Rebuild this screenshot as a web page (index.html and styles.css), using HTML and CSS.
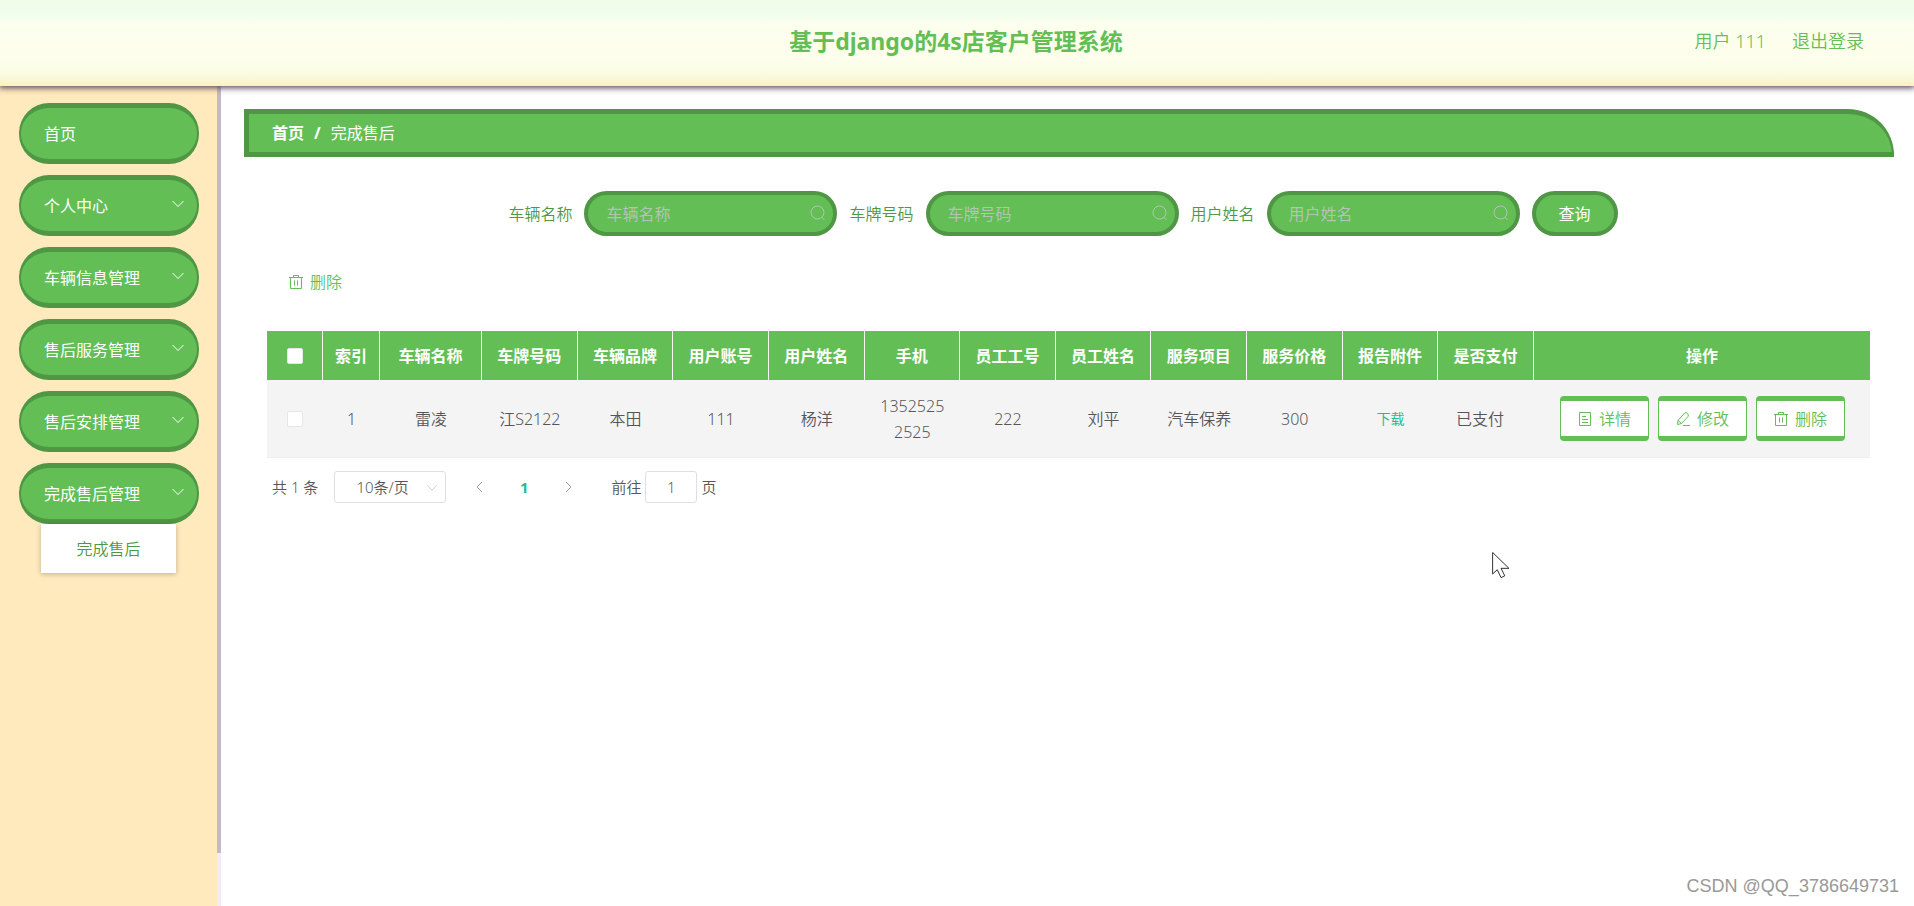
FILE: index.html
```html
<!DOCTYPE html>
<html lang="zh-CN">
<head>
<meta charset="utf-8">
<title>基于django的4s店客户管理系统</title>
<link rel="stylesheet" href="styles.css">
</head>
<body>
<svg class="defs" aria-hidden="true">
  <symbol id="i-down" viewBox="0 0 14 14"><path d="M1.5 4 7 9.500 12.500 4"/></symbol>
  <symbol id="i-left" viewBox="0 0 14 14"><path d="M9 2 4 7l5 5"/></symbol>
  <symbol id="i-right" viewBox="0 0 14 14"><path d="M5 2l5 5-5 5"/></symbol>
  <symbol id="i-search" viewBox="0 0 16 16"><circle cx="7.500" cy="7.500" r="6.500"/><path d="M11.500 12l3 3"/></symbol>
  <symbol id="i-trash" viewBox="0 0 16 16"><path d="M1 3.500h14M5.500 3.500v-2h5v2M2.500 3.500v11h11v-11M6.500 6.500v5M9.500 6.500v5"/></symbol>
  <symbol id="i-doc" viewBox="0 0 16 16"><path d="M2.500 1.500h11v13h-11zM5 5.500h4M5 8.500h6M5 11.500h6"/></symbol>
  <symbol id="i-edit" viewBox="0 0 16 16"><path d="M2.500 13.500l.5-4L9.500 2q1.500-1 3 .5t.5 3L6.500 12.500zM3 9.500l3.500 3M8 14.500h7"/></symbol>
</svg>

<header class="topbar">
  <h1 class="topbar-title">基于django的4s店客户管理系统</h1>
  <div class="topbar-user">
    <span>用户 111</span>
    <a class="logout" href="#">退出登录</a>
  </div>
</header>

<div class="layout">
  <aside class="sidebar">
    <nav class="menu">
      <button class="menu-item" type="button">首页</button>
      <button class="menu-item" type="button">个人中心<svg class="icon menu-arrow"><use href="#i-down"/></svg></button>
      <button class="menu-item" type="button">车辆信息管理<svg class="icon menu-arrow"><use href="#i-down"/></svg></button>
      <button class="menu-item" type="button">售后服务管理<svg class="icon menu-arrow"><use href="#i-down"/></svg></button>
      <button class="menu-item" type="button">售后安排管理<svg class="icon menu-arrow"><use href="#i-down"/></svg></button>
      <div class="menu-group">
        <button class="menu-item" type="button">完成售后管理<svg class="icon menu-arrow"><use href="#i-down"/></svg></button>
        <a class="submenu-item" href="#">完成售后</a>
      </div>
    </nav>
    <div class="scroll-track"><div class="scroll-thumb"></div></div>
  </aside>

  <main class="main">
    <nav class="breadcrumb" aria-label="路径">
      <a class="breadcrumb-home" href="#">首页</a>
      <span class="breadcrumb-sep">/</span>
      <span>完成售后</span>
    </nav>

    <form class="search">
      <label class="search-label" for="car">车辆名称</label>
      <div class="search-box"><input class="search-input" id="car" type="text" placeholder="车辆名称"><svg class="icon search-icon"><use href="#i-search"/></svg></div>
      <label class="search-label" for="plate">车牌号码</label>
      <div class="search-box"><input class="search-input" id="plate" type="text" placeholder="车牌号码"><svg class="icon search-icon"><use href="#i-search"/></svg></div>
      <label class="search-label" for="owner">用户姓名</label>
      <div class="search-box"><input class="search-input" id="owner" type="text" placeholder="用户姓名"><svg class="icon search-icon"><use href="#i-search"/></svg></div>
      <button class="search-btn" type="button">查询</button>
    </form>

    <div class="content">
      <button class="bulk-delete" type="button"><svg class="icon"><use href="#i-trash"/></svg>删除</button>

      <table class="grid">
        <colgroup>
          <col class="col-check"><col class="col-index"><col class="col-name">
          <col span="11"><col class="col-actions">
        </colgroup>
        <thead>
          <tr>
            <th><input class="check" type="checkbox" aria-label="全选"></th>
            <th>索引</th><th>车辆名称</th><th>车牌号码</th><th>车辆品牌</th><th>用户账号</th>
            <th>用户姓名</th><th>手机</th><th>员工工号</th><th>员工姓名</th><th>服务项目</th>
            <th>服务价格</th><th>报告附件</th><th>是否支付</th><th>操作</th>
          </tr>
        </thead>
        <tbody>
          <tr>
            <td><input class="check" type="checkbox" aria-label="选择第1行"></td>
            <td>1</td><td>雷凌</td><td>江S2122</td><td>本田</td><td>111</td>
            <td>杨洋</td><td>13525252525</td><td>222</td><td>刘平</td><td>汽车保养</td>
            <td>300</td><td><a class="download" href="#">下载</a></td><td class="paid">已支付</td>
            <td>
              <div class="actions">
                <button class="action" type="button"><svg class="icon"><use href="#i-doc"/></svg>详情</button>
                <button class="action" type="button"><svg class="icon"><use href="#i-edit"/></svg>修改</button>
                <button class="action" type="button"><svg class="icon"><use href="#i-trash"/></svg>删除</button>
              </div>
            </td>
          </tr>
        </tbody>
      </table>

      <div class="pager">
        <span>共 1 条</span>
        <div class="page-size">
          <select class="page-select" aria-label="每页条数"><option>10条/页</option></select>
          <svg class="icon page-arrow"><use href="#i-down"/></svg>
        </div>
        <div class="page-nav">
          <button class="page-btn" type="button" aria-label="上一页"><svg class="icon"><use href="#i-left"/></svg></button>
          <button class="page-btn page-current" type="button">1</button>
          <button class="page-btn" type="button" aria-label="下一页"><svg class="icon"><use href="#i-right"/></svg></button>
        </div>
        <label class="jump">前往<input class="jump-input" type="text" value="1">页</label>
      </div>
    </div>
  </main>
</div>

<svg class="cursor" viewBox="0 0 20 30" aria-hidden="true"><path d="M.5.500v23l5-4.500 4 8.500 4-2-4-8h8.500z"/></svg>
<div class="watermark">CSDN @QQ_3786649731</div>
</body>
</html>
```
FILE: styles.css
```css
:root {
  --green: #62be55;
  --green-dark: #4f9744;
  --teal: #1fbf8f;
}

* { box-sizing: border-box; }

body {
  margin: 0;
  min-height: 100vh;
  display: flex;
  flex-direction: column;
  font: 350 16px/24px "Noto Sans", "Noto Sans CJK SC", sans-serif;
  color: #55565a;
  background: #fff;
}

button, input, select { font: inherit; color: inherit; margin: 0; }
button { cursor: pointer; }
a { color: inherit; text-decoration: none; }

.defs { display: none; }
.icon {
  width: 16px;
  height: 16px;
  flex: none;
  fill: none;
  stroke: currentColor;
  stroke-width: 1;
}

.topbar {
  position: relative;
  z-index: 1;
  height: 86px;
  display: grid;
  grid-template-columns: 1fr auto 1fr;
  align-items: center;
  padding: 0 50px 4px 48px;
  color: var(--green);
  background: linear-gradient(#effdea 0, #f1fdec 14px, #fcfeee 24px, #fdfeea 66px, #f9f9dc 78px, #fbf2bb 86px);
  box-shadow: 0 1px 6px 1px #5a4a5a;
}
.topbar-title {
  grid-column: 2;
  margin: 0;
  font-size: 23px;
  line-height: 32px;
  font-weight: 700;
}
.topbar-user {
  display: flex;
  justify-content: flex-end;
  gap: 26px;
  font-size: 18px;
}

.layout { flex: 1; display: flex; }

.sidebar {
  flex: none;
  width: 221px;
  display: flex;
  background: #feeabd;
}
.menu {
  flex: 1;
  display: flex;
  flex-direction: column;
  gap: 11px;
  padding: 17px 18px 0 19px;
}
.menu-item {
  width: 100%;
  height: 61px;
  display: flex;
  align-items: center;
  justify-content: space-between;
  padding: 0 12px 0 23px;
  border: solid var(--green-dark);
  border-width: 5px 2px;
  border-radius: 30px;
  font-weight: 400;
  color: #fff;
  background: var(--green);
}
.menu-arrow { width: 14px; height: 14px; margin-bottom: 4px; }
.menu-group { display: flex; flex-direction: column; }
.submenu-item {
  margin: 0 23px 0 22px;
  padding: 13px 0 12px;
  text-align: center;
  color: var(--green-dark);
  background: #fff;
  box-shadow: 0 1px 5px rgba(0, 0, 0, .25);
}
.scroll-track { width: 4px; background: #f3ebf1; }
.scroll-thumb { height: 93.500%; background: #c3bac3; }

.main {
  flex: 1;
  min-width: 0;
  padding: 23px 20px 0 23px;
}

.breadcrumb {
  height: 48px;
  display: flex;
  align-items: center;
  gap: 10px;
  padding: 0 23px;
  border: 5px solid var(--green-dark);
  border-right-width: 2px;
  border-top-right-radius: 46px;
  font-weight: 400;
  color: #fff;
  background: var(--green);
}
.breadcrumb-home, .breadcrumb-sep { font-weight: 700; }

.search {
  display: flex;
  align-items: center;
  justify-content: center;
  gap: 12px;
  padding: 34px 12px 0 0;
  color: var(--green-dark);
}
.search-box { position: relative; width: 253px; }
.search-input {
  width: 100%;
  height: 45px;
  padding: 0 36px 0 18px;
  border: 4px solid var(--green-dark);
  border-radius: 23px;
  font-weight: 400;
  color: #fff;
  background: var(--green);
}
.search-input::placeholder { color: #b4c4b4; opacity: 1; }
.search-icon {
  position: absolute;
  right: 11px;
  top: 14px;
  color: #b4c4b4;
}
.search-btn {
  width: 86px;
  height: 45px;
  padding: 0;
  border: 4px solid var(--green-dark);
  border-radius: 23px;
  font-weight: 400;
  color: #fff;
  background: var(--green);
}

.content { padding: 34px 24px 0 23px; }
.bulk-delete {
  display: flex;
  align-items: center;
  gap: 6px;
  padding: 0 21px;
  border: 0;
  color: var(--green);
  background: none;
}

.grid {
  width: 100%;
  margin-top: 37px;
  table-layout: fixed;
  border-collapse: separate;
  border-spacing: 0;
  text-align: center;
}
.col-check { width: 56px; }
.col-index { width: 57px; }
.col-name { width: 102px; }
.col-actions { width: 336px; }
.grid th {
  height: 49px;
  padding: 0;
  border-right: 1px solid #f4f8f0;
  font-weight: 700;
  color: #fff;
  background: var(--green);
}
.grid th:last-child { border-right: 0; }
.grid td {
  height: 78px;
  padding: 0 12px;
  line-height: 26px;
  word-break: break-all;
  border-bottom: 1px solid #ebeef5;
  background: #f4f4f4;
}
.grid td:nth-child(11) { padding: 0; }
.grid .paid { padding-right: 24px; }
.check {
  appearance: none;
  display: block;
  width: 16px;
  height: 16px;
  margin: 0 auto;
  border: 1px solid #e4e6ea;
  border-radius: 2px;
  background: #fff;
}
.download { font-size: 14px; font-weight: 400; color: var(--teal); }
.actions { display: flex; justify-content: center; gap: 9px; }
.action {
  width: 89px;
  height: 45px;
  display: flex;
  align-items: center;
  justify-content: center;
  gap: 6px;
  padding: 0;
  border: solid var(--green);
  border-width: 5px 1px;
  border-radius: 4px;
  color: var(--green);
  background: #fff;
  white-space: nowrap;
}

.pager {
  display: flex;
  align-items: center;
  padding: 13px 5px 0;
  font-size: 15px;
}
.page-size { position: relative; width: 112px; margin: 0 16px; }
.page-select {
  appearance: none;
  width: 100%;
  height: 32px;
  padding: 0 30px 0 21px;
  border: 1px solid #dcdfe6;
  border-radius: 3px;
  background: #fff;
}
.page-arrow {
  position: absolute;
  right: 8px;
  top: 11px;
  width: 12px;
  height: 12px;
  color: #c0c4cc;
  pointer-events: none;
}
.page-nav { display: flex; gap: 8px; }
.page-btn {
  width: 36px;
  height: 32px;
  display: flex;
  align-items: center;
  justify-content: center;
  padding: 0;
  border: 0;
  background: none;
  color: #a0a4ac;
}
.page-btn .icon { width: 14px; height: 14px; }
.page-current { font-weight: 700; color: var(--teal); }
.jump { display: flex; align-items: center; gap: 4px; margin-left: 25px; }
.jump-input {
  width: 52px;
  height: 32px;
  padding: 0;
  text-align: center;
  border: 1px solid #dcdfe6;
  border-radius: 3px;
}

.cursor {
  position: absolute;
  left: 1492px;
  top: 552px;
  width: 19px;
  height: 28px;
  fill: #fff;
  stroke: #222;
  stroke-width: 1;
}
.watermark {
  position: absolute;
  right: 15px;
  bottom: 8px;
  font: 400 18px/24px "Liberation Sans", sans-serif;
  color: #999;
}
```
